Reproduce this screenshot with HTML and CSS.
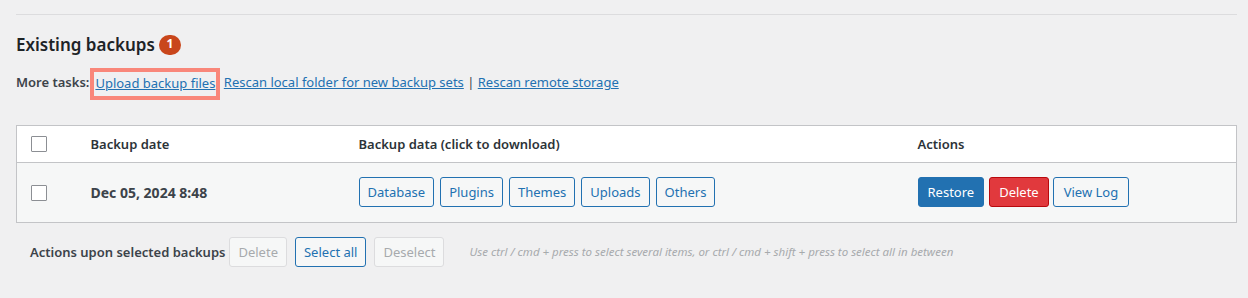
FILE: index.html
```html
<!DOCTYPE html>
<html lang="en">
<head>
	<meta charset="UTF-8">
	<meta name="viewport" content="width=device-width, initial-scale=1.0">
	<title>Existing backups</title>
	<link rel="stylesheet" href="styles.css">
</head>
<body>
	<div class="wrap">
		<div class="rule"></div>

		<h2 class="heading">Existing backups <span class="count">1</span></h2>

		<p class="tasks"><strong>More tasks:</strong><span class="highlight"><a href="#">Upload backup files</a></span> <a href="#">Rescan local folder for new backup sets</a> | <a href="#">Rescan remote storage</a></p>

		<table class="backups">
			<thead>
				<tr>
					<th class="col-check"><span class="checkbox"></span></th>
					<th class="col-date">Backup date</th>
					<th class="col-data">Backup data (click to download)</th>
					<th class="col-actions">Actions</th>
				</tr>
			</thead>
			<tbody>
				<tr>
					<td class="col-check"><span class="checkbox"></span></td>
					<td class="col-date date">Dec 05, 2024 8:48</td>
					<td class="col-data">
						<div class="btn-row">
							<button class="btn small">Database</button>
							<button class="btn small">Plugins</button>
							<button class="btn small">Themes</button>
							<button class="btn small">Uploads</button>
							<button class="btn small">Others</button>
						</div>
					</td>
					<td class="col-actions">
						<div class="btn-row tight">
							<button class="btn primary">Restore</button>
							<button class="btn danger">Delete</button>
							<button class="btn">View Log</button>
						</div>
					</td>
				</tr>
			</tbody>
		</table>

		<div class="bulk">
			<strong>Actions upon selected backups</strong>
			<button class="btn small disabled">Delete</button>
			<button class="btn small">Select all</button>
			<button class="btn small disabled">Deselect</button>
			<em class="hint">Use ctrl / cmd + press to select several items, or ctrl / cmd + shift + press to select all in between</em>
		</div>
	</div>
</body>
</html>
```

FILE: styles.css
```css
body {
	margin: 0;
	background: #f0f0f1;
	color: #3c434a;
	font-family: "Noto Sans", "Open Sans", sans-serif;
	font-size: 13px;
	line-height: 1.4;
}

.wrap {
	padding: 0 11px 0 16px;
}

.rule {
	margin-top: 14px;
	border-top: 1px solid #dcdcde;
}

.heading {
	display: flex;
	align-items: center;
	gap: 4px;
	margin: 20px 0 0;
	height: 19px;
	font-size: 17px;
	font-weight: 600;
	color: #1d2327;
}

.count {
	display: inline-flex;
	justify-content: center;
	align-items: center;
	width: 22px;
	height: 20px;
	border-radius: 10px;
	background: #c9461b;
	color: #fff;
	font-size: 12px;
	font-weight: 700;
}

.tasks {
	margin: 14px 0 0;
	height: 32px;
	line-height: 28px;
	white-space: nowrap;
}

.tasks strong {
	font-weight: 600;
}

.tasks a {
	color: #2271b1;
}

.highlight {
	display: inline-block;
	vertical-align: top;
	margin-left: 1px;
	padding: 1px 1px 3px;
	border: 4px solid #f9877a;
	line-height: 20px;
}

.backups {
	margin-top: 25px;
	width: 100%;
	border-collapse: collapse;
	border: 1px solid #c3c4c7;
	background: #fff;
}

.backups th {
	height: 36px;
	padding: 0;
	text-align: left;
	font-weight: 600;
	color: #2c3338;
	border-bottom: 1px solid #c3c4c7;
}

.backups td {
	height: 59px;
	padding: 0;
	background: #f6f7f7;
}

.col-check {
	width: 74px;
	padding-left: 14px !important;
	box-sizing: border-box;
}

.col-date {
	width: 268px;
}

.col-data {
	width: 559px;
}

.date {
	font-size: 14px;
	font-weight: 700;
	color: #3c434a;
}

.checkbox {
	display: block;
	width: 14px;
	height: 14px;
	border: 1px solid #8c8f94;
	background: #fff;
	border-radius: 1px;
}

.btn-row {
	display: flex;
	gap: 6px;
	padding-bottom: 1px;
}

.btn-row.tight {
	gap: 4px;
}

.btn {
	height: 30px;
	padding: 0 10px;
	border: 1px solid #2271b1;
	border-radius: 3px;
	background: #f6f7f7;
	color: #2271b1;
	font-family: inherit;
	font-size: 13px;
	cursor: pointer;
}

.btn.small {
	padding: 0 8px;
}

.btn.primary {
	background: #2271b1;
	color: #fff;
	padding: 0 9px;
	margin-right: 1px;
}

.btn.danger {
	background: #e1393d;
	border-color: #b8090d;
	color: #fff;
	padding: 0 9px;
}

.bulk {
	display: flex;
	align-items: center;
	gap: 8px;
	margin-top: 14px;
	padding-left: 14px;
}

.bulk strong {
	font-weight: 600;
	margin-right: -4px;
}

.bulk .btn {
	background: #f6f7f7;
}

.bulk .btn.disabled {
	border-color: #dcdcde;
	color: #a7aaad;
}

.hint {
	margin-left: 17px;
	font-size: 11.5px;
	color: #a7aaad;
}
```
